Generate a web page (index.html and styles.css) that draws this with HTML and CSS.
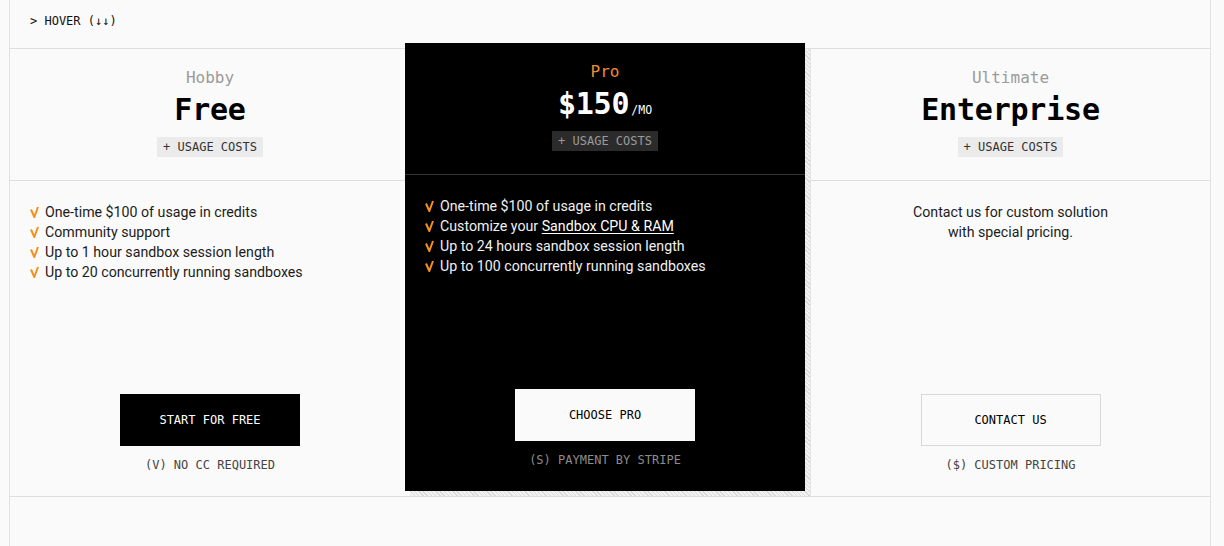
FILE: index.html
```html
<!DOCTYPE html>
<html lang="en">
<head>
<meta charset="utf-8">
<title>Pricing</title>
<link rel="stylesheet" href="styles.css">
</head>
<body>
<div class="frame">
  <div class="topbar">&gt; HOVER (↓↓)</div>
  <div class="plans">
    <div class="plan">
      <div class="plan-head">
        <div class="tier">Hobby</div>
        <div class="price">Free</div>
        <div class="badge">+ USAGE COSTS</div>
      </div>
      <div class="plan-body">
        <ul class="features">
          <li><svg class="check" viewBox="0 0 9 12" aria-hidden="true"><path d="M1 3.5 L4.3 11 L8 1"/></svg>One-time $100 of usage in credits</li>
          <li><svg class="check" viewBox="0 0 9 12" aria-hidden="true"><path d="M1 3.5 L4.3 11 L8 1"/></svg>Community support</li>
          <li><svg class="check" viewBox="0 0 9 12" aria-hidden="true"><path d="M1 3.5 L4.3 11 L8 1"/></svg>Up to 1 hour sandbox session length</li>
          <li><svg class="check" viewBox="0 0 9 12" aria-hidden="true"><path d="M1 3.5 L4.3 11 L8 1"/></svg>Up to 20 concurrently running sandboxes</li>
        </ul>
        <div class="cta">
          <a class="btn btn-dark" href="#">START FOR FREE</a>
          <div class="note">(V) NO CC REQUIRED</div>
        </div>
      </div>
    </div>
    <div class="plan plan-pro">
      <div class="plan-head">
        <div class="tier tier-pro">Pro</div>
        <div class="price">$150<span class="per">/MO</span></div>
        <div class="badge">+ USAGE COSTS</div>
      </div>
      <div class="plan-body">
        <ul class="features">
          <li><svg class="check" viewBox="0 0 9 12" aria-hidden="true"><path d="M1 3.5 L4.3 11 L8 1"/></svg>One-time $100 of usage in credits</li>
          <li><svg class="check" viewBox="0 0 9 12" aria-hidden="true"><path d="M1 3.5 L4.3 11 L8 1"/></svg>Customize your&nbsp;<a class="link" href="#">Sandbox CPU &amp; RAM</a></li>
          <li><svg class="check" viewBox="0 0 9 12" aria-hidden="true"><path d="M1 3.5 L4.3 11 L8 1"/></svg>Up to 24 hours sandbox session length</li>
          <li><svg class="check" viewBox="0 0 9 12" aria-hidden="true"><path d="M1 3.5 L4.3 11 L8 1"/></svg>Up to 100 concurrently running sandboxes</li>
        </ul>
        <div class="cta">
          <a class="btn btn-light" href="#">CHOOSE PRO</a>
          <div class="note">(S) PAYMENT BY STRIPE</div>
        </div>
      </div>
    </div>
    <div class="plan plan-last">
      <div class="plan-head">
        <div class="tier">Ultimate</div>
        <div class="price">Enterprise</div>
        <div class="badge">+ USAGE COSTS</div>
      </div>
      <div class="plan-body">
        <p class="contact-text">Contact us for custom solution<br>with special pricing.</p>
        <div class="cta">
          <a class="btn btn-outline" href="#">CONTACT US</a>
          <div class="note">($) CUSTOM PRICING</div>
        </div>
      </div>
    </div>
  </div>
  <div class="tail"></div>
</div>
</body>
</html>
```

FILE: styles.css
```css
* { box-sizing: border-box; }

html, body {
  margin: 0;
  padding: 0;
  background: #fafafa;
  height: 100%;
  overflow: hidden;
}

body {
  font-family: "Roboto", "Inter", sans-serif;
  color: #1a1a1a;
}

.frame {
  margin-left: 9px;
  width: 1202px;
  min-height: 546px;
  border-left: 1px solid #e2e2e2;
  border-right: 1px solid #e2e2e2;
  display: flex;
  flex-direction: column;
}

.topbar {
  height: 49px;
  border-bottom: 1px solid #dedede;
  padding: 14px 20px 0;
  font-family: "DejaVu Sans Mono", monospace;
  font-size: 12px;
  line-height: 14px;
  color: #111;
}

.plans {
  display: grid;
  grid-template-columns: 400px 400px 400px;
  border-bottom: 1px solid #dedede;
  height: 448px;
}

.plan {
  display: flex;
  flex-direction: column;
  background: #fafafa;
}

.plan-last {
  border-left: 1px solid #e4e4e4;
}

.plan-head {
  height: 132px;
  flex: none;
  border-bottom: 1px solid #dedede;
  padding-top: 19px;
  display: flex;
  flex-direction: column;
  align-items: center;
}

.tier {
  font-family: "DejaVu Sans Mono", monospace;
  font-size: 16px;
  line-height: 20px;
  color: #9a9a9a;
}

.tier-pro {
  color: #f08c32;
}

.price {
  margin-top: 4px;
  font-family: "DejaVu Sans Mono", monospace;
  font-weight: bold;
  font-size: 30px;
  line-height: 36px;
  height: 36px;
  color: #000;
  letter-spacing: -0.2px;
}

.per {
  font-size: 11.5px;
  line-height: 1;
  font-weight: normal;
  letter-spacing: 0;
  margin-left: 2px;
}

.badge {
  margin-top: 9px;
  height: 20px;
  padding: 0 6px;
  background: #ebebeb;
  font-family: "DejaVu Sans Mono", monospace;
  font-size: 12px;
  line-height: 20px;
  color: #333;
}

.plan-body {
  flex: 1;
  display: flex;
  flex-direction: column;
  padding: 21px 20px 24px;
}

.features {
  list-style: none;
  margin: 0;
  padding: 0;
  font-size: 14.2px;
  line-height: 20px;
  color: #1c1c1c;
}

.features li {
  display: flex;
  align-items: center;
}

.check {
  width: 9px;
  height: 12px;
  flex: none;
  margin-right: 6px;
  fill: none;
  stroke: #f5901e;
  stroke-width: 2;
  stroke-linejoin: miter;
}

.contact-text {
  margin: 0;
  text-align: center;
  font-size: 14.2px;
  line-height: 20px;
  color: #1c1c1c;
}

.cta {
  margin-top: auto;
  display: flex;
  flex-direction: column;
  align-items: center;
}

.btn {
  display: flex;
  align-items: center;
  justify-content: center;
  width: 180px;
  height: 52px;
  font-family: "DejaVu Sans Mono", monospace;
  font-size: 12px;
  font-weight: 500;
  text-decoration: none;
}

.btn-dark {
  background: #000;
  color: #fff;
}

.btn-light {
  background: #fafafa;
  color: #000;
}

.btn-outline {
  background: #fafafa;
  color: #000;
  border: 1px solid #d8d8d8;
}

.note {
  margin-top: 12px;
  font-family: "DejaVu Sans Mono", monospace;
  font-size: 12px;
  line-height: 14px;
  color: #444;
}

/* hovered Pro card */
.plan-pro {
  position: relative;
  margin-top: -1px;
  background: #000;
  transform: translate(-5px, -5px);
  z-index: 1;
}

.plan-pro::before {
  content: "";
  position: absolute;
  left: 5px;
  top: 6px;
  width: 100%;
  height: calc(100% - 1px);
  z-index: -1;
  background: repeating-linear-gradient(45deg, #d9d9d9 0 1px, #f2f2f2 1px 3px);
}

.plan-pro .plan-head,
.plan-pro .plan-body {
  background: #000;
}

.plan-pro .plan-head {
  border-bottom-color: #333;
}

.plan-pro .price {
  color: #fff;
}

.plan-pro .badge {
  background: #2b2b2b;
  color: #9a9a9a;
}

.plan-pro .features {
  color: #f0f0f0;
}

.plan-pro .note {
  color: #8c8c8c;
}

.link {
  color: #fff;
  text-decoration: underline;
  text-underline-offset: 2px;
}

.tail {
  flex: 1;
}
```
